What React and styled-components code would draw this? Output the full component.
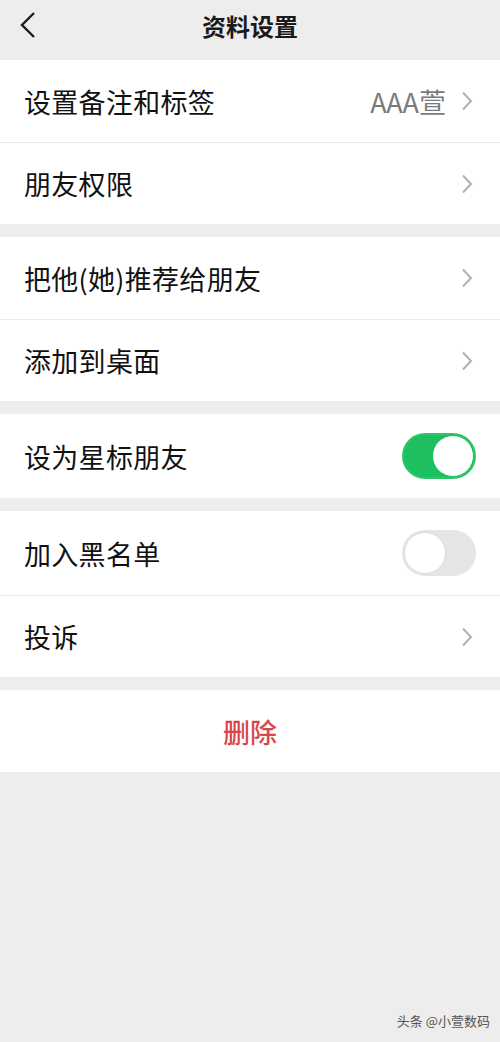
import React, { useState } from 'react';
import styled, { createGlobalStyle } from 'styled-components';

const GlobalStyle = createGlobalStyle`
  html, body {
    margin: 0;
    padding: 0;
    background: #ededed;
    font-family: "Noto Sans CJK SC", "Noto Sans", sans-serif;
  }
`;

const Chevron = () => (
  <svg width="12" height="20" viewBox="0 0 12 20">
    <path d="M2 1.5 L10 10 L2 18.5" fill="none" stroke="#b2b2b2" strokeWidth="2" />
  </svg>
);

const App = () => {
  const [star, setStar] = useState(true);
  const [black, setBlack] = useState(false);

  return (
    <Page>
      <GlobalStyle />
      <Header>
        <Back>
          <svg width="18" height="28" viewBox="0 0 18 28">
            <path d="M15 2 L3 14 L15 26" fill="none" stroke="#1a1a1a" strokeWidth="2.4" />
          </svg>
        </Back>
        <Title>资料设置</Title>
      </Header>

      <Group>
        <Row>
          <Label>设置备注和标签</Label>
          <Value>AAA萱</Value>
          <Chevron />
        </Row>
        <Row>
          <Label>朋友权限</Label>
          <Chevron />
        </Row>
      </Group>

      <Group>
        <Row>
          <Label>把他(她)推荐给朋友</Label>
          <Chevron />
        </Row>
        <Row>
          <Label>添加到桌面</Label>
          <Chevron />
        </Row>
      </Group>

      <Group>
        <Row tall>
          <Label>设为星标朋友</Label>
          <Toggle on={star} onClick={() => setStar(!star)}><Knob on={star} /></Toggle>
        </Row>
      </Group>

      <Group>
        <Row tall>
          <Label>加入黑名单</Label>
          <Toggle on={black} onClick={() => setBlack(!black)}><Knob on={black} /></Toggle>
        </Row>
        <Row>
          <Label>投诉</Label>
          <Chevron />
        </Row>
      </Group>

      <Group>
        <DeleteRow>删除</DeleteRow>
      </Group>

      <Spacer />
      <Footer>头条 @小萱数码</Footer>
    </Page>
  );
};

export default App;

// styled components
const Page = styled.div`
  width: 500px;
  height: 1042px;
  display: flex;
  flex-direction: column;
  background: #ededed;
  overflow: hidden;
`;

const Header = styled.div`
  height: 60px;
  display: flex;
  align-items: center;
  justify-content: center;
  position: relative;
  flex-shrink: 0;
`;

const Back = styled.div`
  position: absolute;
  left: 19px;
  top: 11px;
  display: flex;
`;

const Title = styled.div`
  font-size: 24px;
  font-weight: 700;
  color: #1a1a1a;
  margin-top: -10px;
`;

const Group = styled.div`
  background: #fff;
  margin-bottom: 13px;
  flex-shrink: 0;
`;

const Row = styled.div`
  height: ${(p) => (p.tall ? 84 : 82)}px;
  display: flex;
  align-items: center;
  padding: 0 27px 0 24px;
  box-sizing: border-box;
  & + & {
    border-top: 1px solid #ececec;
  }
`;

const Label = styled.div`
  flex: 1;
  font-size: 27px;
  color: #111;
  letter-spacing: 0.3px;
`;

const Value = styled.div`
  font-size: 27px;
  color: #7b7b7b;
  margin-right: 15px;
`;

const Toggle = styled.div`
  width: 74px;
  height: 46px;
  border-radius: 23px;
  box-sizing: border-box;
  background: ${(p) => (p.on ? '#1dbf5e' : '#e5e5e5')};
  border: 2px solid ${(p) => (p.on ? '#2cc56a' : '#e5e5e5')};
  display: flex;
  align-items: center;
  justify-content: ${(p) => (p.on ? 'flex-end' : 'flex-start')};
  margin-right: -3px;
  cursor: pointer;
`;

const Knob = styled.div`
  width: 42px;
  height: 42px;
  border-radius: 50%;
  background: #fff;
  box-sizing: border-box;
  border: 1px solid ${(p) => (p.on ? '#1dbf5e' : '#dcdcdc')};
`;

const DeleteRow = styled.div`
  height: 82px;
  display: flex;
  align-items: center;
  justify-content: center;
  font-size: 27px;
  font-weight: 500;
  color: #d9474a;
`;

const Spacer = styled.div`
  flex: 1;
`;

const Footer = styled.div`
  align-self: flex-end;
  font-size: 13px;
  color: #555;
  padding: 0 10px 12px 0;
`;
